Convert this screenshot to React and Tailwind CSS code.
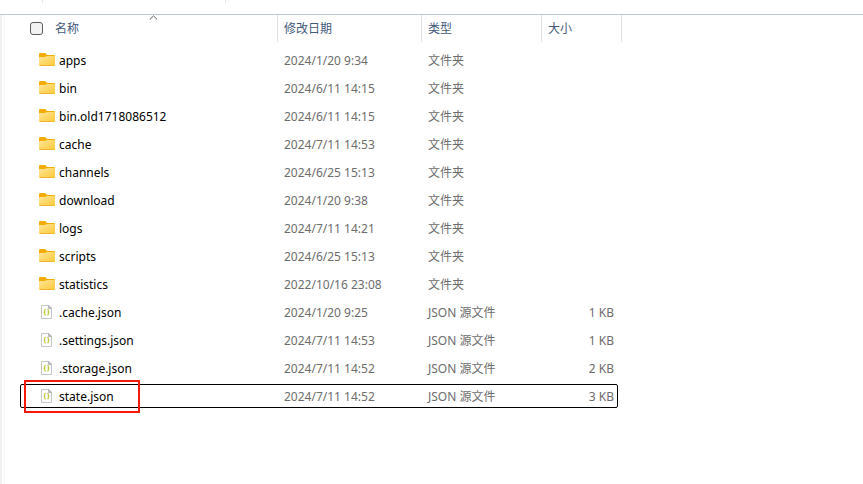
import { useState } from 'react'

const FILES = [
  { name: 'apps', date: '2024/1/20 9:34', type: 'folder' },
  { name: 'bin', date: '2024/6/11 14:15', type: 'folder' },
  { name: 'bin.old1718086512', date: '2024/6/11 14:15', type: 'folder' },
  { name: 'cache', date: '2024/7/11 14:53', type: 'folder' },
  { name: 'channels', date: '2024/6/25 15:13', type: 'folder' },
  { name: 'download', date: '2024/1/20 9:38', type: 'folder' },
  { name: 'logs', date: '2024/7/11 14:21', type: 'folder' },
  { name: 'scripts', date: '2024/6/25 15:13', type: 'folder' },
  { name: 'statistics', date: '2022/10/16 23:08', type: 'folder' },
  { name: '.cache.json', date: '2024/1/20 9:25', type: 'json', size: '1 KB' },
  { name: '.settings.json', date: '2024/7/11 14:53', type: 'json', size: '1 KB' },
  { name: '.storage.json', date: '2024/7/11 14:52', type: 'json', size: '2 KB' },
  { name: 'state.json', date: '2024/7/11 14:52', type: 'json', size: '3 KB' }
]

const TYPE_LABELS = { folder: '文件夹', json: 'JSON 源文件' }

function FolderIcon() {
  return (
    <svg width="16" height="14" viewBox="0 0 16 14" aria-hidden="true">
      <defs>
        <linearGradient id="folder" x1="0" y1="0" x2="1" y2="1">
          <stop offset="0" stopColor="#ffe69a" />
          <stop offset="1" stopColor="#ffc938" />
        </linearGradient>
      </defs>
      <path d="M0 1.2Q0 0 1.2 0H5.6Q6.3 0 6.8 .5L8.2 2H14.8Q16 2 16 3.2V7H0Z" fill="#f3ab05" />
      <path d="M0 5Q0 4 1 4H5.6Q6.4 4 7 3.6L7.6 3.2Q8 3 8.6 3H15Q16 3 16 4V11.8Q16 13 14.8 13H1.2Q0 13 0 11.8Z" fill="url(#folder)" />
      <path d="M.5 12.5H15.5" stroke="#eeb22c" />
    </svg>
  )
}

function JsonIcon() {
  return (
    <svg width="16" height="14" viewBox="0 0 16 14" fill="none" aria-hidden="true">
      <path d="M2.5 .5H10L12.5 3V13.5H2.5Z" fill="#fafcfd" stroke="#c4c8c9" />
      <path d="M9.5 .5V3.5H12.5Z" fill="#c3c7c9" stroke="#b4b8ba" />
      <path d="M6.7 4.5H6.2Q5.7 4.5 5.7 5.2V6.6L5.2 7.2L5.7 7.8V9.2Q5.7 9.9 6.2 9.9H6.7M8.3 4.5H8.8Q9.3 4.5 9.3 5.2V6.6L9.8 7.2L9.3 7.8V9.2Q9.3 9.9 8.8 9.9H8.3" stroke="#c3c83c" strokeWidth="1.2" />
    </svg>
  )
}

function HeaderCell({ label, children }) {
  return (
    <th scope="col" className="h-[31px] p-0 text-left align-top font-normal">
      <div className="relative flex h-[27px] items-center border-r border-[#e1e1e1] pl-1.5">
        {children}
        <button type="button">{label}</button>
      </div>
    </th>
  )
}

export default function App() {
  const [focused, setFocused] = useState('state.json')

  return (
    <div className="flex min-h-screen flex-col bg-white font-['Noto_Sans','Noto_Sans_CJK_SC',sans-serif] text-xs text-[#6d6d6d]">
      <div className="flex h-[15px] items-start border-b border-[#b9c9d8]">
        <div className="h-[3px] w-[43px] border-r border-[#e5e5e5]" />
        <div className="h-[3px] w-[183px] border-r border-[#e5e5e5]" />
      </div>

      <div className="flex grow">
        <div className="w-[5px] shrink-0 border-r border-[#f5f5f5]">
          <div className="h-full w-0.5 bg-[#f0f0f0]" />
        </div>
        <main className="grow pl-[15px]">
          <table className="w-[602px] table-fixed border-collapse">
            <colgroup>
              <col className="w-[258px]" />
              <col className="w-36" />
              <col className="w-[120px]" />
              <col className="w-20" />
            </colgroup>
            <thead className="text-[#44597b]">
              <tr>
                <HeaderCell label="名称">
                  <input
                    type="checkbox"
                    aria-label="全选"
                    className="mr-3 ml-1 size-[13px] appearance-none rounded-[3px] border border-[#5c5c5c] bg-[#f3f3f3] checked:bg-[#0067c0]"
                  />
                  {/* 升序标记 */}
                  <svg className="absolute top-0 left-[129px]" width="9" height="5" viewBox="0 0 9 5" fill="none" aria-hidden="true">
                    <path d="M.8 4.5L4.5 .9L8.2 4.5" stroke="#5c5c5c" />
                  </svg>
                </HeaderCell>
                <HeaderCell label="修改日期" />
                <HeaderCell label="类型" />
                <HeaderCell label="大小" />
              </tr>
            </thead>
            <tbody>
              {FILES.map((file) => (
                <tr key={file.name} className="relative h-7" onClick={() => setFocused(file.name)}>
                  <td className="p-0">
                    <div className="flex items-center gap-1 pl-[19px] text-black">
                      {file.type === 'folder' ? <FolderIcon /> : <JsonIcon />}
                      <span className="pt-0.5">{file.name}</span>
                    </div>
                    {focused === file.name && (
                      <>
                        <div className="pointer-events-none absolute inset-y-0.5 right-1 left-0 rounded-xs border border-black" />
                        <div className="pointer-events-none absolute -top-0.5 left-1 h-[33px] w-[116px] border-2 border-[#f5190c]" />
                      </>
                    )}
                  </td>
                  <td className="p-0 pt-0.5 pl-1.5">{file.date}</td>
                  <td className="p-0 pt-0.5 pl-1.5">{TYPE_LABELS[file.type]}</td>
                  <td className="p-0 pt-0.5 pr-2 text-right">{file.size}</td>
                </tr>
              ))}
            </tbody>
          </table>
        </main>
      </div>
    </div>
  )
}
